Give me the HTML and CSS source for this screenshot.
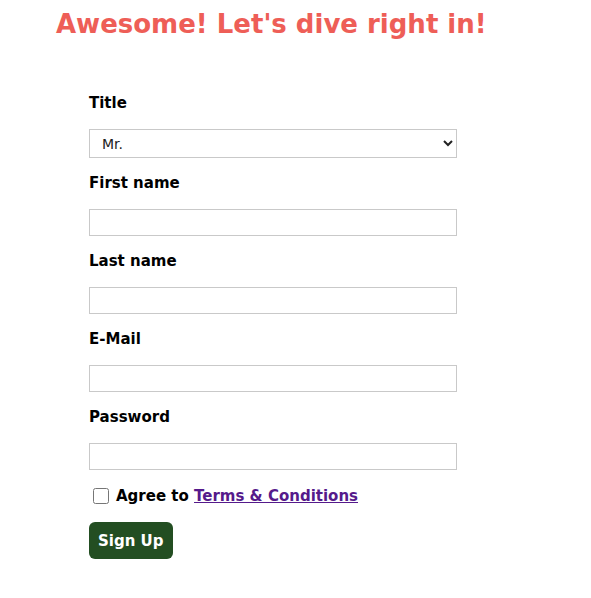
FILE: index.html
```html
<!DOCTYPE html>
<html lang="en">
<head>
<meta charset="utf-8">
<title>Sign up</title>
<link rel="stylesheet" href="styles.css">
</head>
<body>
<h1 class="heading">Awesome! Let's dive right in!</h1>
<form class="signup">
  <label class="field-label" for="title">Title</label>
  <select id="title" class="field-select">
    <option>Mr.</option>
    <option>Mrs.</option>
    <option>Ms.</option>
  </select>
  <label class="field-label" for="first">First name</label>
  <input id="first" class="field-input" type="text">
  <label class="field-label" for="last">Last name</label>
  <input id="last" class="field-input" type="text">
  <label class="field-label" for="mail">E-Mail</label>
  <input id="mail" class="field-input" type="email">
  <label class="field-label" for="pw">Password</label>
  <input id="pw" class="field-input" type="password">
  <div class="agree">
    <input id="agree" class="agree-box" type="checkbox">
    <label for="agree" class="agree-label">Agree to <a class="terms" href="#">Terms &amp; Conditions</a></label>
  </div>
  <button type="button" class="submit">Sign Up</button>
</form>
</body>
</html>
```
FILE: styles.css
```css
* { box-sizing: border-box; }
body {
  margin: 0;
  font-family: "DejaVu Sans", "Open Sans", sans-serif;
  color: #000;
  background: #fff;
}
.heading {
  margin: 0;
  padding: 2px 0 0 56px;
  font-size: 26px;
  line-height: 44px;
  font-weight: 700;
  color: #ee5e57;
}
.signup {
  display: flex;
  flex-direction: column;
  align-items: flex-start;
  padding: 47px 0 0 89px;
}
.field-label {
  font-size: 15px;
  font-weight: 700;
  line-height: 20px;
  margin: 0 0 16px;
}
.field-select,
.field-input {
  width: 368px;
  border: 1px solid #c9c9c9;
  background: #fff;
  margin: 0 0 15px;
  font-family: inherit;
}
.field-select {
  height: 29px;
  font-size: 14px;
  padding: 0 8px;
  border-radius: 0;
  color: #222;
}
.field-input {
  height: 27px;
  padding: 2px 6px;
  font-size: 14px;
}
.agree {
  display: flex;
  align-items: center;
  gap: 7px;
  height: 20px;
  margin: 1px 0 16px 4px;
}
.agree-box {
  width: 16px;
  height: 16px;
  margin: 0;
}
.agree-label {
  font-size: 15px;
  font-weight: 700;
}
.terms {
  color: #551a8b;
}
.submit {
  height: 37px;
  padding: 0 9px;
  background: #234e22;
  color: #fff;
  border: none;
  border-radius: 6px;
  font-family: inherit;
  font-size: 15px;
  font-weight: 700;
}
```
